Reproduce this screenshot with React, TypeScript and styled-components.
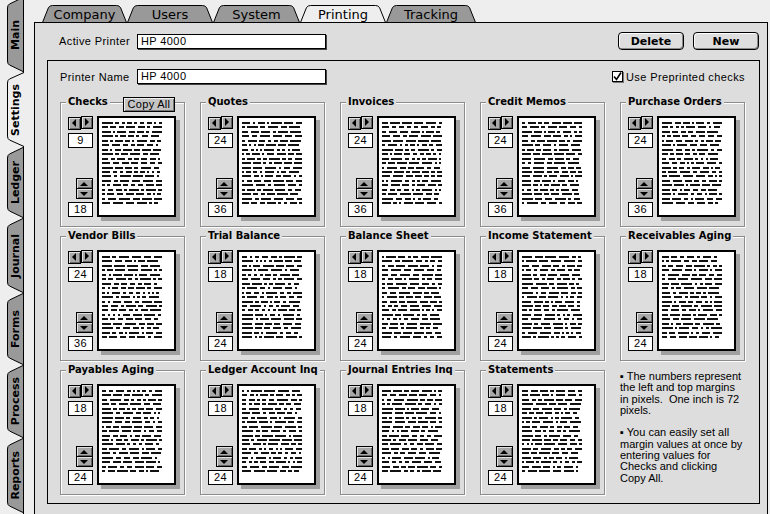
import React from "react";
import styled, { createGlobalStyle } from "styled-components";

const GlobalStyle = createGlobalStyle`
  html, body { margin: 0; padding: 0; background: #eeeeee; }
  body {
    width: 770px; height: 514px; overflow: hidden;
    font-family: "Liberation Sans", Arial, sans-serif; font-size: 11px; color: #000;
  }
  * { box-sizing: border-box; }
`;

const Screen = styled.div`
  display: flex;
  width: 770px;
  height: 514px;
  background: #eeeeee;
  overflow: hidden;
`;

/* ---------- side tabs ---------- */
const SideTabs = styled.div`
  width: 23px;
  flex: none;
  display: flex;
  flex-direction: column;
  margin-top: -3px;
  position: relative;
  z-index: 2;
`;

const SideTab = styled.div<{ $h: number }>`
  position: relative;
  height: ${(p) => p.$h}px;
  flex: none;
  display: flex;
  align-items: center;
  justify-content: center;
  padding-left: 8px;
`;

const SideLabel = styled.span`
  position: relative;
  writing-mode: vertical-rl;
  transform: rotate(180deg);
  font-family: "DejaVu Sans", sans-serif;
  font-weight: bold;
  font-size: 11px;
  line-height: 11px;
  white-space: nowrap;
`;

const ShapeSvg = styled.svg`
  position: absolute;
  overflow: visible;
`;

function VTabShape({ h, active }: { h: number; active: boolean }) {
  const w = active ? 18 : 17;
  const s = 9;
  const d = `M ${w} 0.5 L 3.5 ${s - 2} Q 1.5 ${s - 1} 1.5 ${s + 2} L 1.5 ${h - s - 2} Q 1.5 ${h - s + 1} 3.5 ${h - s + 2} L ${w} ${h - 0.5}`;
  return (
    <ShapeSvg width={w} height={h} style={{ left: 6, top: 0 }}>
      <path d={d + " Z"} fill={active ? "#eeeeee" : "#999999"} />
      <path d={d} fill="none" stroke="#000" strokeWidth={1} />
    </ShapeSvg>
  );
}

/* ---------- page & top tabs ---------- */
const Page = styled.div`
  flex: 1;
  border-left: 1px solid #000;
  display: flex;
  flex-direction: column;
  padding-top: 5px;
  min-width: 0;
`;

const TopTabs = styled.div`
  display: flex;
  height: 17px;
  margin-left: 18px;
  flex: none;
`;

const TopTab = styled.div<{ $w: number }>`
  position: relative;
  width: ${(p) => p.$w}px;
  height: 17px;
  flex: none;
  display: flex;
  align-items: center;
  justify-content: center;
  font-family: "DejaVu Sans", sans-serif;
  font-size: 13px;
  padding-top: 1px;
`;

const TabText = styled.span`
  position: relative;
  white-space: nowrap;
`;

function HTabShape({ w, active }: { w: number; active: boolean }) {
  const s = 8;
  const d = `M 0.5 17.5 L ${s - 1.5} 2.5 Q ${s} 0.5 ${s + 2.5} 0.5 L ${w - s - 2.5} 0.5 Q ${w - s} 0.5 ${w - s + 1.5} 2.5 L ${w - 0.5} 17.5`;
  return (
    <ShapeSvg width={w} height={18} style={{ left: 0, top: 0 }}>
      <path d={d + " Z"} fill={active ? "#eeeeee" : "#999999"} />
      <path d={d} fill="none" stroke="#000" strokeWidth={1} />
    </ShapeSvg>
  );
}

const Panel = styled.div`
  flex: 1;
  margin: 0 2px 0 10px;
  border: 1px solid #000;
  border-bottom: none;
  background: #dddddd;
  display: flex;
  flex-direction: column;
  position: relative;
  z-index: 1;
`;

const HeaderRow = styled.div`
  display: flex;
  align-items: center;
  height: 18px;
  margin-top: 9px;
  padding: 0 8px 0 24px;
`;

const Label = styled.span<{ $w: number }>`
  width: ${(p) => p.$w}px;
  flex: none;
  white-space: nowrap;
  letter-spacing: 0.4px;
`;

const Field = styled.div<{ $w: number }>`
  width: ${(p) => p.$w}px;
  height: 15px;
  background: #fff;
  border: 1px solid #000;
  box-shadow: 1px 1px 0 #444;
  line-height: 13px;
  padding-left: 3px;
  letter-spacing: 0.4px;
`;

const ButtonBar = styled.div`
  margin-left: auto;
  display: flex;
  gap: 9px;
`;

const PushButton = styled.div`
  width: 66px;
  height: 18px;
  border: 1px solid #000;
  border-radius: 4px;
  background: #dedede;
  box-shadow: inset 1px 1px 0 #fff, inset -1px -1px 0 #8a8a8a;
  font-family: "DejaVu Sans", sans-serif;
  font-weight: bold;
  font-size: 11px;
  display: flex;
  align-items: center;
  justify-content: center;
`;

const InnerBox = styled.div`
  margin: 10px 7px 0 12px;
  height: 444px;
  border: 1px solid #000;
  padding: 8px 14px 0 12px;
  display: flex;
  flex-direction: column;
`;

const PrinterRow = styled.div`
  display: flex;
  align-items: center;
  height: 15px;
`;

const CheckWrap = styled.div`
  margin-left: auto;
  display: flex;
  align-items: center;
  gap: 3px;
  letter-spacing: 0.4px;
`;

const CheckBox = styled.span`
  width: 11px;
  height: 11px;
  background: #fff;
  border: 1px solid #000;
  box-shadow: 1px 1px 0 #777;
  display: flex;
  align-items: center;
  justify-content: center;
`;

const Grid = styled.div`
  margin-top: 18px;
  display: grid;
  grid-template-columns: repeat(5, 125px);
  grid-auto-rows: 125px;
  column-gap: 15px;
  row-gap: 9px;
`;

const Card = styled.div`
  position: relative;
  border: 1px solid #8c8c8c;
  box-shadow: 1px 1px 0 #fff, inset 1px 1px 0 #fff;
  padding: 13px 0 0 7px;
  display: flex;
  gap: 4px;
  align-items: flex-start;
`;

const Legend = styled.span`
  position: absolute;
  top: -7px;
  left: 5px;
  padding: 0 2px;
  background: #dddddd;
  font-family: "DejaVu Sans", sans-serif;
  font-weight: bold;
  font-size: 10px;
  line-height: 12px;
  white-space: nowrap;
`;

const CopyAll = styled.div`
  position: absolute;
  top: -6px;
  left: 62px;
  width: 52px;
  height: 15px;
  border: 1px solid #000;
  background: #c4c4c4;
  box-shadow: inset 1px 1px 0 #eee, inset -1px -1px 0 #777;
  line-height: 13px;
  text-align: center;
  white-space: nowrap;
  letter-spacing: 0.3px;
`;

const Controls = styled.div`
  width: 25px;
  height: 101px;
  flex: none;
  display: flex;
  flex-direction: column;
  justify-content: space-between;
  padding-top: 1px;
`;

const CtlGroup = styled.div`
  display: flex;
  flex-direction: column;
  align-items: flex-end;
  gap: 3px;
`;

const HPair = styled.div`
  display: flex;
  width: 25px;
`;

const VPair = styled.div`
  display: flex;
  flex-direction: column;
  width: 17px;
`;

const ArrowBtn = styled.div<{ $w: number; $h: number }>`
  width: ${(p) => p.$w}px;
  height: ${(p) => p.$h}px;
  border: 1px solid #000;
  background: #a8a8a8;
  box-shadow: inset 1px 1px 0 #e0e0e0, inset -1px -1px 0 #666;
  display: flex;
  align-items: center;
  justify-content: center;
  & + & {
    margin-left: ${(p) => (p.$w < 15 ? -1 : 0)}px;
    margin-top: ${(p) => (p.$w < 15 ? 0 : -1)}px;
  }
`;

const NumBox = styled.div`
  width: 25px;
  height: 15px;
  border: 1px solid #000;
  background: #fff;
  text-align: center;
  line-height: 13px;
  letter-spacing: 0.4px;
`;

const Paper = styled.div`
  width: 79px;
  height: 101px;
  flex: none;
  border: 2px solid #000;
  background: #fff;
  box-shadow: 4px 4px 0 #a0a0a0;
  padding: 4px 0 0 3px;
`;

const Notes = styled.div`
  padding-top: 1px;
  line-height: 11.3px;
  & p {
    margin: 0 0 11.3px 0;
  }
`;

type Dir = "l" | "r" | "u" | "d";
function Tri({ dir }: { dir: Dir }) {
  const pts: Record<Dir, string> = {
    l: "5,0 5,8 1,4",
    r: "1,0 1,8 5,4",
    u: "0,5 8,5 4,1",
    d: "0,1 8,1 4,5",
  };
  const horiz = dir === "l" || dir === "r";
  return (
    <svg width={horiz ? 6 : 9} height={horiz ? 9 : 6} style={{ display: "block" }}>
      <polygon points={pts[dir]} fill="#000" />
    </svg>
  );
}

function PageLines({ seed }: { seed: number }) {
  let s = (seed * 7919 + 13) % 233280;
  const rnd = () => {
    s = (s * 9301 + 49297) % 233280;
    return s / 233280;
  };
  const rects: React.ReactNode[] = [];
  for (let i = 0; i < 19; i++) {
    const y = Math.round(i * 4.45);
    let x = 0;
    let k = 0;
    const limit = 60;
    while (x < limit - 2) {
      const w = 2 + Math.floor(rnd() * 10);
      const end = Math.min(limit, x + w);
      rects.push(<rect key={`${i}-${k++}`} x={x} y={y} width={end - x} height={2} fill="#111" />);
      x = end + 2 + Math.floor(rnd() * 2);
    }
  }
  return (
    <svg width={60} height={84} shapeRendering="crispEdges" style={{ display: "block" }}>
      {rects}
    </svg>
  );
}

const topTabs = [
  { name: "Company", w: 85 },
  { name: "Users", w: 86 },
  { name: "System", w: 87 },
  { name: "Printing", w: 86, active: true },
  { name: "Tracking", w: 90 },
];

const sideTabs = [
  { name: "Main", h: 75 },
  { name: "Settings", h: 75, active: true },
  { name: "Ledger", h: 71 },
  { name: "Journal", h: 75 },
  { name: "Forms", h: 72 },
  { name: "Process", h: 73 },
  { name: "Reports", h: 75 },
];

const cards = [
  { title: "Checks", l: 9, t: 18, copy: true },
  { title: "Quotes", l: 24, t: 36 },
  { title: "Invoices", l: 24, t: 36 },
  { title: "Credit Memos", l: 24, t: 36 },
  { title: "Purchase Orders", l: 24, t: 36 },
  { title: "Vendor Bills", l: 24, t: 36 },
  { title: "Trial Balance", l: 18, t: 24 },
  { title: "Balance Sheet", l: 18, t: 24 },
  { title: "Income Statement", l: 18, t: 24 },
  { title: "Receivables Aging", l: 18, t: 24 },
  { title: "Payables Aging", l: 18, t: 24 },
  { title: "Ledger Account Inq", l: 18, t: 24 },
  { title: "Journal Entries Inq", l: 18, t: 24 },
  { title: "Statements", l: 18, t: 24 },
];

export default function App() {
  return (
    <>
      <GlobalStyle />
      <Screen>
        <SideTabs>
          {sideTabs.map((t) => (
            <SideTab key={t.name} $h={t.h}>
              <VTabShape h={t.h} active={!!t.active} />
              <SideLabel>{t.name}</SideLabel>
            </SideTab>
          ))}
        </SideTabs>
        <Page>
          <TopTabs>
            {topTabs.map((t) => (
              <TopTab key={t.name} $w={t.w}>
                <HTabShape w={t.w} active={!!t.active} />
                <TabText>{t.name}</TabText>
              </TopTab>
            ))}
          </TopTabs>
          <Panel>
            <HeaderRow>
              <Label $w={78}>Active Printer</Label>
              <Field $w={189}>HP 4000</Field>
              <ButtonBar>
                <PushButton>Delete</PushButton>
                <PushButton>New</PushButton>
              </ButtonBar>
            </HeaderRow>
            <InnerBox>
              <PrinterRow>
                <Label $w={77}>Printer Name</Label>
                <Field $w={189}>HP 4000</Field>
                <CheckWrap>
                  <CheckBox>
                    <svg width={9} height={9} style={{ display: "block" }}>
                      <path d="M1 4.5 L3.5 7.5 L8 0.5" fill="none" stroke="#000" strokeWidth={1.6} />
                    </svg>
                  </CheckBox>
                  <span>Use Preprinted checks</span>
                </CheckWrap>
              </PrinterRow>
              <Grid>
                {cards.map((c, i) => (
                  <Card key={c.title}>
                    <Legend>{c.title}</Legend>
                    {c.copy && <CopyAll>Copy All</CopyAll>}
                    <Controls>
                      <CtlGroup>
                        <HPair>
                          <ArrowBtn $w={13} $h={13}>
                            <Tri dir="l" />
                          </ArrowBtn>
                          <ArrowBtn $w={13} $h={13}>
                            <Tri dir="r" />
                          </ArrowBtn>
                        </HPair>
                        <NumBox>{c.l}</NumBox>
                      </CtlGroup>
                      <CtlGroup>
                        <VPair>
                          <ArrowBtn $w={17} $h={11}>
                            <Tri dir="u" />
                          </ArrowBtn>
                          <ArrowBtn $w={17} $h={11}>
                            <Tri dir="d" />
                          </ArrowBtn>
                        </VPair>
                        <NumBox>{c.t}</NumBox>
                      </CtlGroup>
                    </Controls>
                    <Paper>
                      <PageLines seed={i + 3} />
                    </Paper>
                  </Card>
                ))}
                <Notes>
                  <p>
                    ▪ The numbers represent the left and top margins in pixels.&nbsp; One inch is 72
                    pixels.
                  </p>
                  <p>
                    ▪ You can easily set all margin values at once by entering values for Checks and
                    clicking Copy All.
                  </p>
                </Notes>
              </Grid>
            </InnerBox>
          </Panel>
        </Page>
      </Screen>
    </>
  );
}
